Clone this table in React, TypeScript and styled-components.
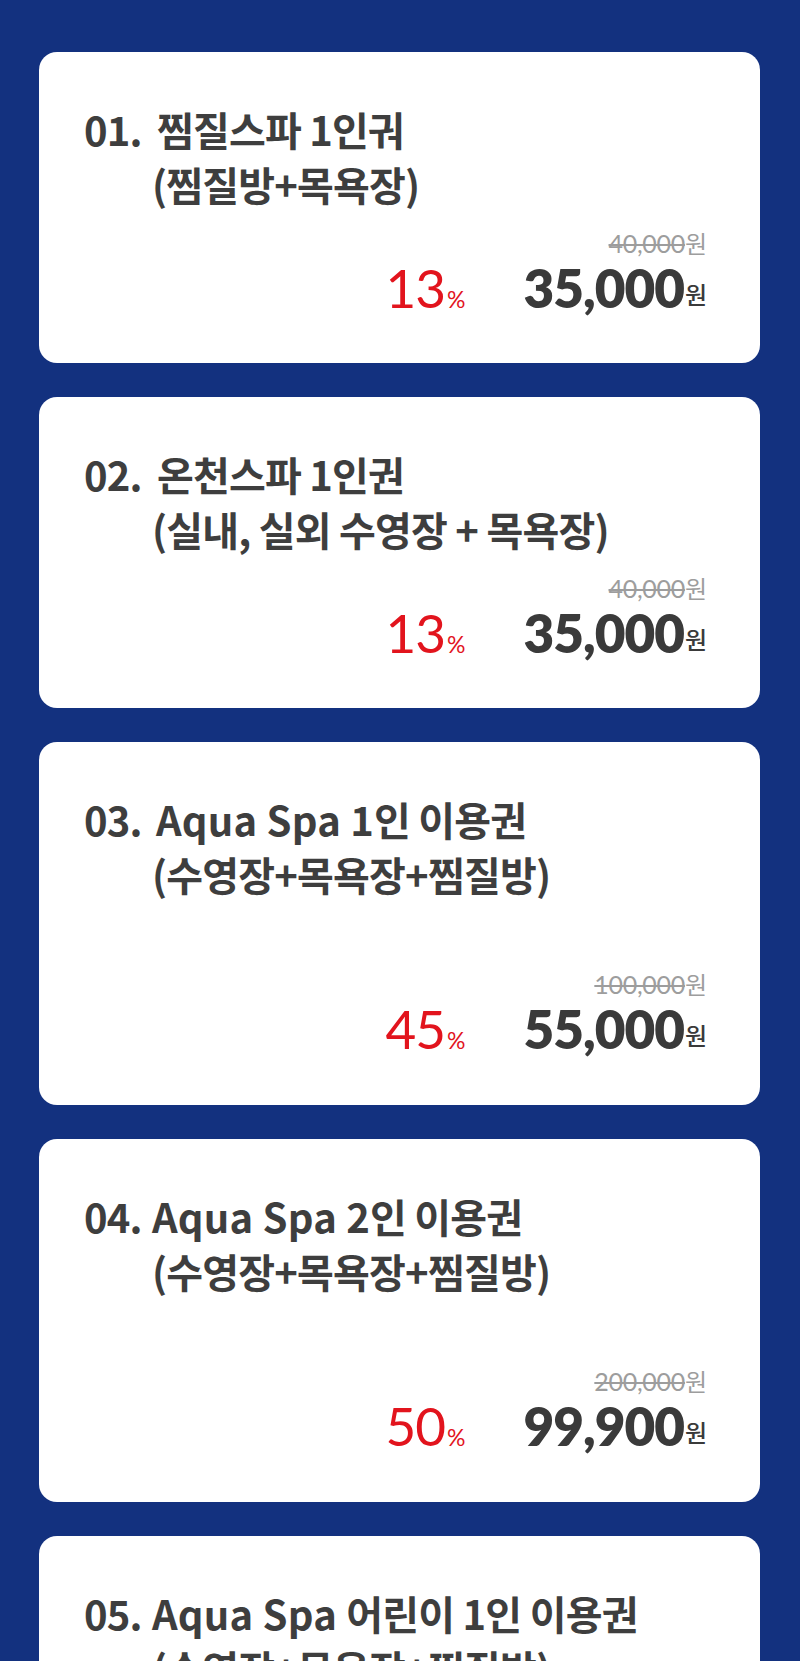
import React from "react";
import styled, { createGlobalStyle } from "styled-components";

const Global = createGlobalStyle`
  html, body { margin: 0; padding: 0; }
  body {
    background: #13317f;
    font-family: "Noto Sans CJK KR", "Noto Sans", sans-serif;
  }
`;

const Page = styled.main`
  width: 800px;
  height: 1661px;
  overflow: hidden;
  box-sizing: border-box;
  background: #13317f;
  padding: 52px 40px 0 39px;
  display: flex;
  flex-direction: column;
  gap: 34px;
`;

const Card = styled.section<{ $h: number }>`
  flex: none;
  height: ${(p) => p.$h}px;
  box-sizing: border-box;
  background: #ffffff;
  border-radius: 18px;
  padding: 50px 53px 0 45px;
  display: flex;
  flex-direction: column;
`;

const Title = styled.h2`
  margin: 0;
  font-family: "Noto Sans CJK KR", "Noto Sans", sans-serif;
  font-weight: 700;
  font-size: 40px;
  line-height: 55px;
  color: #3e3e3e;
  letter-spacing: -0.8px;
`;

const Line = styled.div<{ $indent?: number }>`
  white-space: nowrap;
  padding-left: ${(p) => p.$indent ?? 0}px;
`;

const Num = styled.span<{ $w: number }>`
  display: inline-block;
  width: ${(p) => p.$w}px;
`;

const Latin = styled.span`
  letter-spacing: 0.2px;
`;

const PriceBox = styled.div<{ $top: number }>`
  margin-top: ${(p) => p.$top}px;
  display: flex;
  flex-direction: column;
  align-items: flex-end;
`;

const OldPrice = styled.div`
  display: flex;
  align-items: baseline;
  color: #9d9d9d;
  line-height: 28px;
`;

const OldNum = styled.span`
  font-family: Lato, "Liberation Sans", sans-serif;
  font-size: 25px;
  font-weight: 400;
  text-decoration: line-through;
  text-decoration-thickness: 2px;
  letter-spacing: -0.3px;
`;

const OldWon = styled.span`
  font-family: "Noto Sans CJK KR", sans-serif;
  font-size: 24px;
  font-weight: 400;
`;

const SaleRow = styled.div`
  display: flex;
  align-items: baseline;
  gap: 58px;
  line-height: 62px;
`;

const Discount = styled.span`
  font-family: Lato, "Liberation Sans", sans-serif;
  font-weight: 400;
  font-size: 53px;
  color: #e2141d;
  letter-spacing: -1px;
`;

const Pct = styled.span`
  font-size: 23px;
  letter-spacing: 0;
  margin-left: 2px;
`;

const Price = styled.span`
  font-family: Lato, "Liberation Sans", sans-serif;
  font-weight: 800;
  font-size: 53px;
  color: #3a3a3a;
  letter-spacing: -1px;
`;

const Won = styled.span`
  font-family: "Noto Sans CJK KR", sans-serif;
  font-weight: 500;
  font-size: 24px;
  letter-spacing: 0;
  vertical-align: 4px;
  margin-left: 1px;
`;

type Item = {
  num: string;
  numW: number;
  latin?: string;
  name: string;
  sub: string;
  old?: string;
  pct?: string;
  price?: string;
  h: number;
  priceTop?: number;
};

const items: Item[] = [
  { num: "01.", numW: 73, name: "찜질스파 1인궈", sub: "(찜질방+목욕장)", old: "40,000", pct: "13", price: "35,000", h: 311, priceTop: 17 },
  { num: "02.", numW: 73, name: "온천스파 1인권", sub: "(실내, 실외 수영장 + 목욕장)", old: "40,000", pct: "13", price: "35,000", h: 311, priceTop: 17 },
  { num: "03.", numW: 72, latin: "Aqua Spa 1", name: "인 이용권", sub: "(수영장+목욕장+찜질방)", old: "100,000", pct: "45", price: "55,000", h: 363, priceTop: 68 },
  { num: "04.", numW: 68, latin: "Aqua Spa 2", name: "인 이용권", sub: "(수영장+목욕장+찜질방)", old: "200,000", pct: "50", price: "99,900", h: 363, priceTop: 68 },
  { num: "05.", numW: 68, latin: "Aqua Spa ", name: "어린이 1인 이용권", sub: "(수영장+목욕장+찜질방)", h: 363 },
];

export default function App() {
  return (
    <>
      <Global />
      <Page>
        {items.map((it) => (
          <Card key={it.num} $h={it.h}>
            <Title>
              <Line>
                <Num $w={it.numW}>{it.num}</Num>
                {it.latin && <Latin>{it.latin}</Latin>}
                {it.name}
              </Line>
              <Line $indent={68}>{it.sub}</Line>
            </Title>
            {it.price && (
              <PriceBox $top={it.priceTop ?? 0}>
                <OldPrice>
                  <OldNum>{it.old}</OldNum>
                  <OldWon>원</OldWon>
                </OldPrice>
                <SaleRow>
                  <Discount>
                    {it.pct}
                    <Pct>%</Pct>
                  </Discount>
                  <Price>
                    {it.price}
                    <Won>원</Won>
                  </Price>
                </SaleRow>
              </PriceBox>
            )}
          </Card>
        ))}
      </Page>
    </>
  );
}
